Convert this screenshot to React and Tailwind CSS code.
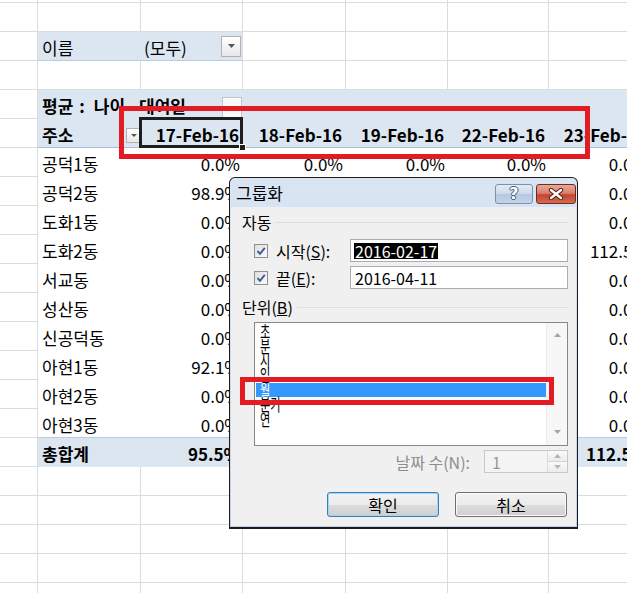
import React from 'react';

const KR = "font-['Noto_Sans_CJK_KR','Noto_Sans',sans-serif]";

const CW = ['w-[38px]', 'w-[103px]', 'w-[102px]', 'w-[103px]', 'w-[102px]', 'w-[101px]', 'w-[102px]'];
const VW = CW.slice(2);

function GridCell({ w }) {
  return <div className={`${w} shrink-0 border-r border-b border-[#dadcdd]`} />;
}

function PlainRow({ h = 'h-[29px]' }) {
  return (
    <div className={`flex ${h}`}>
      {CW.map((w, i) => (
        <GridCell key={i} w={w} />
      ))}
    </div>
  );
}

function ACell() {
  return <div className="w-[38px] shrink-0 border-r border-b border-[#dadcdd]" />;
}

function Tri({ down = true, color = '#4a4a4a', w = 7, h = 4 }) {
  return (
    <svg width={w} height={h} viewBox={`0 0 ${w} ${h}`}>
      {down ? (
        <path d={`M0 0 L${w} 0 L${w / 2} ${h} Z`} fill={color} />
      ) : (
        <path d={`M0 ${h} L${w} ${h} L${w / 2} 0 Z`} fill={color} />
      )}
    </svg>
  );
}

function DropBtn({ small }) {
  return (
    <div
      className={`${small ? 'w-[15px] h-[15px]' : 'w-[20px] h-[21px]'} shrink-0 border border-[#b1b1b1] bg-[linear-gradient(#ffffff,#e8e8e8)] flex items-center justify-center`}
    >
      <Tri w={small ? 6 : 7} h={small ? 3 : 4} color="#555" />
    </div>
  );
}

const data = [
  ['공덕1동', ['0.0%', '0.0%', '0.0%', '0.0%', '0.0%']],
  ['공덕2동', ['98.9%', '0.0%', '0.0%', '0.0%', '0.0%']],
  ['도화1동', ['0.0%', '0.0%', '0.0%', '0.0%', '0.0%']],
  ['도화2동', ['0.0%', '0.0%', '0.0%', '0.0%', '112.5%']],
  ['서교동', ['0.0%', '0.0%', '0.0%', '0.0%', '0.0%']],
  ['성산동', ['0.0%', '0.0%', '0.0%', '0.0%', '0.0%']],
  ['신공덕동', ['0.0%', '0.0%', '0.0%', '0.0%', '0.0%']],
  ['아현1동', ['92.1%', '0.0%', '0.0%', '0.0%', '0.0%']],
  ['아현2동', ['0.0%', '0.0%', '0.0%', '0.0%', '0.0%']],
  ['아현3동', ['0.0%', '0.0%', '0.0%', '0.0%', '0.0%']],
];

const dates = ['17-Feb-16', '18-Feb-16', '19-Feb-16', '22-Feb-16', '23-Feb-16'];

function DataRow({ label, vals, last }) {
  return (
    <div className="flex h-[29px]">
      <ACell />
      <div className={`flex bg-white ${last ? 'border-b border-[#b8cce4]' : ''}`}>
        <div className="w-[103px] shrink-0 pl-[4px] flex items-center pt-[3px]">{label}</div>
        {vals.map((v, i) => (
          <div key={i} className={`${VW[i]} shrink-0 pr-[3px] flex items-center justify-end pt-[3px]`}>
            {v}
          </div>
        ))}
      </div>
    </div>
  );
}

function Sheet() {
  return (
    <div className="flex flex-col text-[17px] text-black">
      <PlainRow h="h-[3px]" />
      <PlainRow />
      {/* 이름 filter row */}
      <div className="flex h-[29px]">
        <ACell />
        <div className="flex shrink-0 bg-[#dce6f1] border-b border-[#b8cce4]">
          <div className="w-[103px] shrink-0 pl-[4px] flex items-center pt-[3px]">이름</div>
          <div className="w-[102px] shrink-0 flex items-center justify-between pl-[3px] pr-[1px] border-r border-[#dadcdd]">
            <span className="pt-[3px]">(모두)</span>
            <DropBtn />
          </div>
        </div>
        {CW.slice(3).map((w, i) => (
          <GridCell key={i} w={w} />
        ))}
      </div>
      <PlainRow />
      {/* 평균 row */}
      <div className="flex h-[29px]">
        <ACell />
        <div className="flex flex-1 bg-[#dce6f1]">
          <div className="w-[205px] shrink-0 flex items-end justify-between pl-[4px] pr-[1px]">
            <span className="self-center pt-[3px] font-bold whitespace-nowrap">
              <span>평균</span>
              <span className="ml-[6px]">:</span>
              <span className="ml-[9px]">나이</span>
              <span className="ml-[14px]">대여일</span>
            </span>
            <div className="w-[20px] h-[21px] mb-[1px] border border-[#c4c4c4] bg-[#f7f9fb]" />
          </div>
        </div>
      </div>
      {/* 주소 / dates row */}
      <div className="flex h-[29px]">
        <ACell />
        <div className="flex flex-1 bg-[#dce6f1] border-b border-[#a9c0dc]">
          <div className="w-[103px] shrink-0 pl-[4px] flex items-center justify-between">
            <span className="pt-[3px] font-bold">주소</span>
            <div className="mt-[4px]">
              <DropBtn small />
            </div>
          </div>
          {dates.map((d, i) => (
            <div key={i} className={`${VW[i]} shrink-0 pr-[4px] flex items-center justify-end pt-[3px] font-bold whitespace-nowrap`}>
              {d}
            </div>
          ))}
        </div>
      </div>
      {data.map(([l, v], i) => (
        <DataRow key={i} label={l} vals={v} last={i === data.length - 1} />
      ))}
      {/* total row */}
      <div className="flex h-[29px]">
        <ACell />
        <div className="flex flex-1 bg-[#dce6f1] font-bold">
          <div className="w-[103px] shrink-0 pl-[4px] flex items-center pt-[3px]">총합계</div>
          {['95.5%', '0.0%', '0.0%', '0.0%', '112.5%'].map((v, i) => (
            <div key={i} className={`${VW[i]} shrink-0 pr-[3px] flex items-center justify-end pt-[3px]`}>
              {v}
            </div>
          ))}
        </div>
      </div>
      <PlainRow />
      <PlainRow />
      <PlainRow />
      <PlainRow />
      <PlainRow />
    </div>
  );
}

function Check() {
  return (
    <div className="w-[14px] h-[14px] shrink-0 border border-[#8e8f8f] bg-[linear-gradient(135deg,#dedede,#fbfbfb)] flex items-center justify-center">
      <svg width="10" height="10" viewBox="0 0 10 10">
        <path d="M1.5 5 L4 7.8 L8.8 1.8" fill="none" stroke="#3a5b9d" strokeWidth="1.9" />
      </svg>
    </div>
  );
}

const listItems = ['초', '분', '시', '일', '월', '분기', '연'];

function Dialog() {
  return (
    <div className="absolute left-[229px] top-[177px] w-[349px] h-[352px] border border-b-2 border-[#1c1c1c] rounded-t-[6px] bg-[linear-gradient(#d9e5f3,#bfd2e9)] flex flex-col text-[16px] text-black">
      {/* title bar */}
      <div className="h-[29px] shrink-0 flex items-start pl-[6px] pr-[1px]">
        <span className="pt-[5px] leading-[20px] text-[17px]">그룹화</span>
        <div className="ml-auto mt-[6px] flex gap-[3px]">
          <div className="w-[38px] h-[20px] rounded-[3px] border border-[#7d91ab] bg-[linear-gradient(#e3ecf6_0%,#cbdaea_50%,#b3c7de_51%,#c3d4e8_100%)] flex items-center justify-center">
            <span className="font-bold text-[16px] leading-none text-white font-['DejaVu_Sans',sans-serif] [text-shadow:1px_0_0_#4b5b6e,-1px_0_0_#4b5b6e,0_1px_0_#4b5b6e,0_-1px_0_#4b5b6e]">
              ?
            </span>
          </div>
          <div className="w-[40px] h-[20px] rounded-[3px] border border-[#6e2b22] bg-[linear-gradient(#e8a995_0%,#d9826e_45%,#c4452f_55%,#d46c4f_100%)] flex items-center justify-center">
            <svg width="16" height="12" viewBox="0 0 16 12">
              <path d="M3 2 L13 10 M13 2 L3 10" stroke="#5b1d14" strokeWidth="4.4" strokeLinecap="round" />
              <path d="M3 2 L13 10 M13 2 L3 10" stroke="#ffffff" strokeWidth="2.4" strokeLinecap="round" />
            </svg>
          </div>
        </div>
      </div>
      {/* body */}
      <div className="flex-1 mx-[1px] mb-[1px] bg-[#f0f0f0] flex flex-col pr-[8px]">
        {/* 자동 */}
        <div className="mt-[3px] h-[24px] flex items-center pl-[11px]">
          <span>자동</span>
          <div className="flex-1 ml-[4px] border-t border-[#d5dfe5]" />
        </div>
        <div className="mt-[5px] h-[23px] flex items-center pl-[23px]">
          <Check />
          <span className="ml-[8px] whitespace-nowrap">
            시작(<span className="underline">S</span>):
          </span>
          <div className="ml-auto w-[218px] h-[23px] border border-[#abadb3] bg-white flex items-center pl-[3px]">
            <span className="bg-black text-white leading-[16px] px-[1px]">2016-02-17</span>
          </div>
        </div>
        <div className="mt-[4px] h-[23px] flex items-center pl-[23px]">
          <Check />
          <span className="ml-[8px] whitespace-nowrap">
            끝(<span className="underline">E</span>):
          </span>
          <div className="ml-auto w-[218px] h-[23px] border border-[#abadb3] bg-white flex items-center pl-[4px]">
            <span className="leading-[16px]">2016-04-11</span>
          </div>
        </div>
        {/* 단위 */}
        <div className="mt-[6px] h-[24px] flex items-center pl-[11px]">
          <span>
            단위(<span className="underline">B</span>)
          </span>
          <div className="flex-1 ml-[4px] border-t border-[#d5dfe5]" />
        </div>
        <div className="mt-[3px] ml-[23px] w-[314px] h-[124px] shrink-0 border border-[#828790] bg-white flex">
          <div className="flex-1 pl-[1px] pt-[1px] overflow-hidden">
            {listItems.map((t) => (
              <div
                key={t}
                className={`h-[14.7px] leading-[14.7px] pl-[4px] whitespace-nowrap ${t === '월' ? 'bg-[#3399ff] text-white' : ''}`}
              >
                <span className="inline-block scale-x-[0.66] origin-left text-[17px]">{t}</span>
              </div>
            ))}
          </div>
          <div className="w-[21px] shrink-0 bg-[#f7f7f7] border-l border-[#ebebeb] flex flex-col items-center justify-between pt-[10px] pb-[11px]">
            <Tri down={false} color="#a6a6a6" w={7} h={4} />
            <Tri color="#a6a6a6" w={7} h={4} />
          </div>
        </div>
        {/* 날짜 수 */}
        <div className="mt-[4px] h-[23px] flex items-center justify-end">
          <span className="text-[#8d8d8d] mr-[14px]">날짜 수(N):</span>
          <div className="w-[84px] h-[23px] border border-[#c8c8c8] bg-[#f4f4f4] flex">
            <div className="flex-1 pl-[7px] flex items-center text-[#9a9a9a]">1</div>
            <div className="w-[20px] flex flex-col border-l border-[#dcdcdc]">
              <div className="flex-1 flex items-center justify-center border-b border-[#d4d4d4] bg-[linear-gradient(#fafafa,#ececec)]">
                <Tri down={false} color="#b5b5b5" w={7} h={4} />
              </div>
              <div className="flex-1 flex items-center justify-center bg-[linear-gradient(#fafafa,#ececec)]">
                <Tri color="#b5b5b5" w={7} h={4} />
              </div>
            </div>
          </div>
        </div>
        {/* buttons */}
        <div className="mt-[19px] flex justify-end gap-[16px] pr-[1px]">
          <div className="w-[112px] h-[25px] rounded-[3px] border border-[#3c7fb1] shadow-[inset_0_0_0_1px_#9fd8f5] bg-[linear-gradient(#f2f2f2_0%,#ebebeb_50%,#dddddd_51%,#cfcfcf_100%)] flex items-center justify-center">
            확인
          </div>
          <div className="w-[112px] h-[25px] rounded-[3px] border border-[#707070] shadow-[inset_0_0_0_1px_#fbfbfb] bg-[linear-gradient(#f2f2f2_0%,#ebebeb_50%,#dddddd_51%,#cfcfcf_100%)] flex items-center justify-center">
            취소
          </div>
        </div>
      </div>
    </div>
  );
}

export default function App() {
  return (
    <div className={`relative w-[627px] h-[593px] overflow-hidden bg-white ${KR}`}>
      <Sheet />
      {/* selected cell */}
      <div className="absolute left-[139px] top-[117px] w-[104px] h-[31px] border-[3px] border-[#1e1e1e]" />
      <div className="absolute left-[239px] top-[144px] w-[7px] h-[7px] bg-[#1e1e1e] border border-white" />
      {/* red highlight around dates */}
      <div className="absolute left-[119px] top-[106px] w-[471px] h-[53px] border-[5px] border-[#e31b23]" />
      <Dialog />
      {/* red highlight around 월 */}
      <div className="absolute left-[240px] top-[377px] w-[314px] h-[28px] border-[5px] border-[#e31b23]" />
    </div>
  );
}
